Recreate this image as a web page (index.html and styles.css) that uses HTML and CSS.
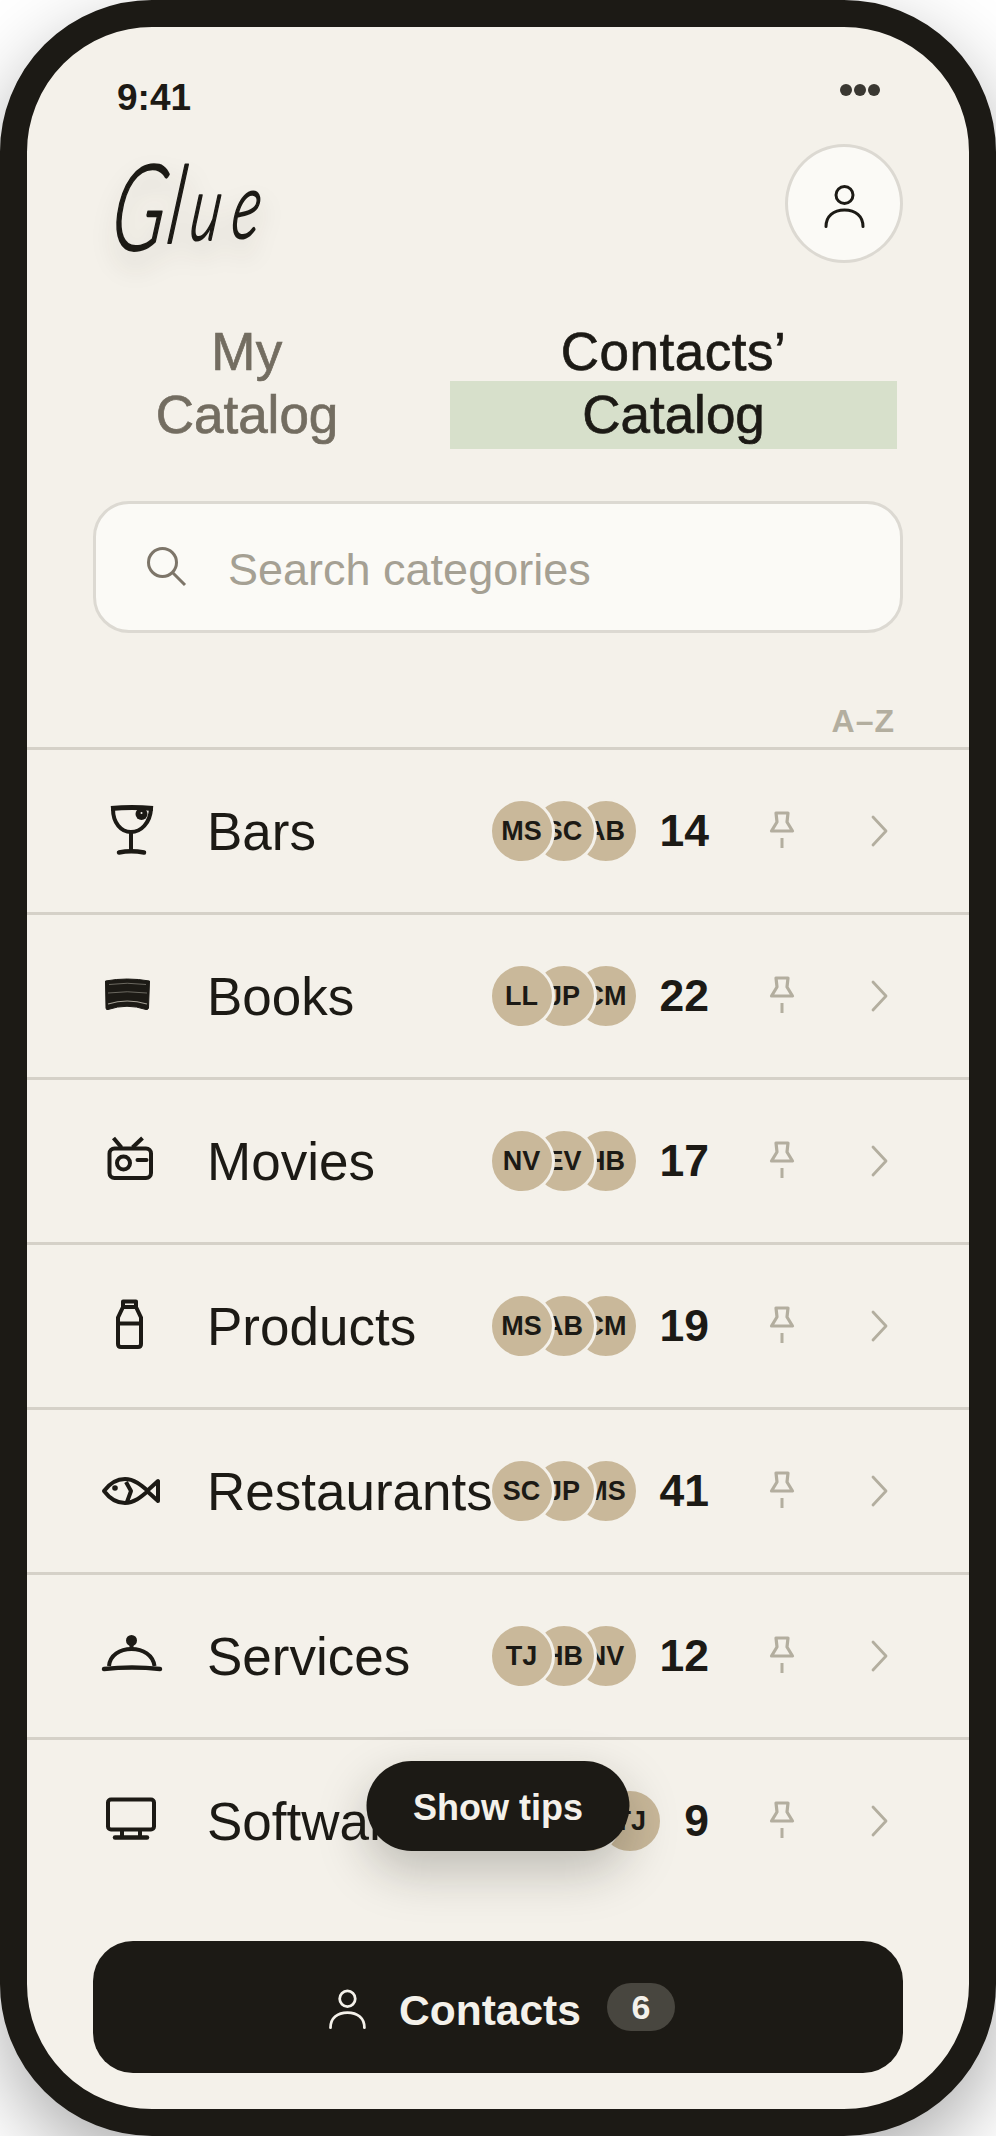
FILE: index.html
```html
<!DOCTYPE html>
<html lang="en">

<head>
    <meta charset="UTF-8">
    <meta name="viewport" content="width=device-width, initial-scale=1.0">
    <title>Glue</title>
    <link rel="stylesheet" href="styles.css">
</head>

<body>
    <svg class="sprites" aria-hidden="true">
        <symbol id="pin" viewBox="0 0 40 40">
            <path d="M14 2H26L25 11L30.5 20H9.5L15 11Z" fill="none" stroke="currentColor" stroke-width="3.2" stroke-linejoin="round" />
            <path d="M20 27V37" fill="none" stroke="currentColor" stroke-width="3" />
        </symbol>
        <symbol id="chevron" viewBox="0 0 32 40">
            <path d="M9 6L22 20L9 34" fill="none" stroke="currentColor" stroke-width="2.8" stroke-linecap="round" stroke-linejoin="round" />
        </symbol>
        <symbol id="person" viewBox="0 0 48 48">
            <circle cx="24.5" cy="15" r="8.5" fill="none" stroke="currentColor" stroke-width="3" />
            <path d="M6 46.5C6 36 13.5 30 24.5 30C35.5 30 43 36 43 46.5" fill="none" stroke="currentColor" stroke-width="3" stroke-linecap="round" />
        </symbol>
    </svg>

    <div class="phone">
        <div class="screen">
            <div class="status">
                <span class="time">9:41</span>
                <div class="dots"><i></i><i></i><i></i></div>
            </div>

            <header class="top">
                <svg class="logo" viewBox="0 0 207 119">
                    <text transform="skewX(-8) scale(0.65 1)"><tspan x="46" y="106" font-size="120">G</tspan><tspan x="132" y="99" font-size="108">l</tspan><tspan x="166" y="96" font-size="90">u</tspan><tspan x="230" y="94" font-size="92">e</tspan></text>
                </svg>
                <button class="profile"><svg><use href="#person" /></svg></button>
            </header>

            <nav class="tabs">
                <div class="tab tab-mine">
                    <span class="tab-line">My</span>
                    <span class="tab-line tab-line2">Catalog</span>
                </div>
                <div class="tab tab-contacts">
                    <span class="tab-line">Contacts’</span>
                    <span class="tab-line tab-line2 mark">Catalog</span>
                </div>
            </nav>

            <div class="search">
                <svg viewBox="0 0 40 40" class="search-icon">
                    <circle cx="15.5" cy="15.5" r="14" fill="none" stroke="currentColor" stroke-width="3" />
                    <path d="M26 26L38 38" fill="none" stroke="currentColor" stroke-width="3" />
                </svg>
                <span class="placeholder">Search categories</span>
            </div>

            <div class="sort">A–Z</div>

            <div class="list">
                <div class="row">
                    <svg class="row-icon" viewBox="0 0 64 64">
                        <path d="M11 9.5Q32 7.5 53 9.5" stroke-width="5" />
                        <path d="M13 10C13 24 21 33 31 33C41 33 50 24 51 10" />
                        <path d="M31 33V53" />
                        <path d="M19 53.5Q31 51 44 53.5" stroke-width="4.5" stroke-linecap="round" />
                        <circle cx="41.5" cy="15" r="6" fill="#1c1a15" stroke="none" />
                        <circle cx="41.5" cy="14" r="1" fill="#f4f1ea" stroke="none" />
                    </svg>
                    <span class="name">Bars</span>
                    <div class="avatars"><span>MS</span><span>SC</span><span>AB</span></div>
                    <span class="count">14</span>
                    <svg class="pin"><use href="#pin" /></svg>
                    <svg class="chevron"><use href="#chevron" /></svg>
                </div>
                <div class="row">
                    <svg class="row-icon" viewBox="0 0 64 64">
                        <path d="M5.5 17Q27 13 49.5 17L48.5 44Q48 46 46 45.5Q27 39 8 45.5Q6 46 6 44Z" fill="#1c1a15" stroke="#1c1a15" stroke-width="1" />
                        <path d="M9 20.5Q27 18 46 20.5M8 29Q27 26.5 47 29" stroke="#8d897f" stroke-width="0.7" />
                        <path d="M8 40Q27 34 47 40" stroke="#a5a196" stroke-width="1.2" />
                    </svg>
                    <span class="name">Books</span>
                    <div class="avatars"><span>LL</span><span>JP</span><span>CM</span></div>
                    <span class="count">22</span>
                    <svg class="pin"><use href="#pin" /></svg>
                    <svg class="chevron"><use href="#chevron" /></svg>
                </div>
                <div class="row">
                    <svg class="row-icon" viewBox="0 0 64 64">
                        <rect x="9.5" y="19.5" width="41.5" height="29.5" rx="5" />
                        <path d="M13.5 9L21.5 18.5M42.5 9L32.5 18.5" />
                        <circle cx="23.5" cy="34" r="6.5" />
                        <path d="M37.5 31H46.5" stroke-linecap="round" />
                    </svg>
                    <span class="name">Movies</span>
                    <div class="avatars"><span>NV</span><span>EV</span><span>HB</span></div>
                    <span class="count">17</span>
                    <svg class="pin"><use href="#pin" /></svg>
                    <svg class="chevron"><use href="#chevron" /></svg>
                </div>
                <div class="row">
                    <svg class="row-icon" viewBox="0 0 64 64">
                        <path d="M23 13V7.5H36V13" />
                        <path d="M23 13H36L41 23.5V50Q41 53 38 53H21Q18 53 18 50V23.5Z" />
                        <path d="M18 29.5H41" />
                    </svg>
                    <span class="name">Products</span>
                    <div class="avatars"><span>MS</span><span>AB</span><span>CM</span></div>
                    <span class="count">19</span>
                    <svg class="pin"><use href="#pin" /></svg>
                    <svg class="chevron"><use href="#chevron" /></svg>
                </div>
                <div class="row">
                    <svg class="row-icon" viewBox="0 0 64 64">
                        <path d="M4 32C10 24 18 20 25 20C34 20 41 26 48 32C41 38 34 44 25 44C18 44 10 40 4 32Z" />
                        <path d="M47 32L58 22V42Z" />
                        <path d="M26 23L31 32L27 43" />
                        <circle cx="15" cy="29" r="2.8" fill="#1c1a15" stroke="none" />
                    </svg>
                    <span class="name">Restaurants</span>
                    <div class="avatars"><span>SC</span><span>JP</span><span>MS</span></div>
                    <span class="count">41</span>
                    <svg class="pin"><use href="#pin" /></svg>
                    <svg class="chevron"><use href="#chevron" /></svg>
                </div>
                <div class="row">
                    <svg class="row-icon" viewBox="0 0 64 64">
                        <circle cx="31.5" cy="16.5" r="3.5" fill="#1c1a15" />
                        <path d="M31.5 20V25" />
                        <path d="M9 42C10 31 20 25 31.5 25C43 25 53 31 54.5 42" />
                        <path d="M4 45Q32 42 60 45" stroke-width="4.5" stroke-linecap="round" />
                    </svg>
                    <span class="name">Services</span>
                    <div class="avatars"><span>TJ</span><span>HB</span><span>NV</span></div>
                    <span class="count">12</span>
                    <svg class="pin"><use href="#pin" /></svg>
                    <svg class="chevron"><use href="#chevron" /></svg>
                </div>
                <div class="row">
                    <svg class="row-icon" viewBox="0 0 64 64">
                        <rect x="8" y="10.5" width="46" height="30" rx="3" />
                        <path d="M22 41V48M40 41V48" />
                        <path d="M15 48.5H47" stroke-width="4.5" stroke-linecap="round" />
                    </svg>
                    <span class="name">Software</span>
                    <div class="avatars"><span>LL</span><span>SC</span><span>TJ</span></div>
                    <span class="count">9</span>
                    <svg class="pin"><use href="#pin" /></svg>
                    <svg class="chevron"><use href="#chevron" /></svg>
                </div>
            </div>

            <button class="tips">Show tips</button>

            <button class="contacts">
                <svg class="contacts-icon"><use href="#person" /></svg>
                <span class="contacts-label">Contacts</span>
                <span class="badge">6</span>
            </button>
        </div>
    </div>
</body>

</html>
```

FILE: styles.css
```css
* {
    box-sizing: border-box;
}

body {
    margin: 0;
    background-color: #ffffff;
    font-family: "Liberation Sans", Arial, sans-serif;
    color: #1c1a15;
}

button {
    font-family: inherit;
    border: none;
    padding: 0;
}

.sprites {
    position: absolute;
    width: 0;
    height: 0;
}

.phone {
    width: 996px;
    height: 2136px;
    border: 27px solid #1c1a15;
    border-radius: 152px;
    background-color: #f4f1ea;
    box-shadow: 0 30px 80px rgba(0, 0, 0, 0.32);
    overflow: hidden;
}

.screen {
    position: relative;
    height: 100%;
    display: flex;
    flex-direction: column;
}

/* status bar */
.status {
    height: 117px;
    display: flex;
    justify-content: space-between;
    padding: 51px 89px 0 90px;
}

.time {
    font-size: 37px;
    font-weight: bold;
    line-height: 40px;
}

.dots {
    display: flex;
    gap: 2px;
    margin-top: 6px;
}

.dots i {
    width: 12px;
    height: 12px;
    border-radius: 50%;
    background-color: #3a3832;
}

/* logo + profile */
.top {
    display: flex;
    justify-content: space-between;
    padding: 0 66px;
    height: 119px;
}

.logo {
    width: 207px;
    height: 119px;
    overflow: visible;
    font-family: "Lato", sans-serif;
    font-style: italic;
    font-weight: 300;
    fill: #1c1a15;
    stroke: #1c1a15;
    stroke-width: 2;
    stroke-linejoin: round;
    filter: drop-shadow(0 14px 12px rgba(28, 26, 21, 0.16));
}

.profile {
    width: 118px;
    height: 119px;
    border-radius: 50%;
    border: 3px solid #dcd9d2;
    background-color: #fbfaf6;
    color: #1c1a15;
    display: flex;
    align-items: center;
    justify-content: center;
}

.profile svg {
    width: 48px;
    height: 48px;
}

/* tabs */
.tabs {
    display: flex;
    margin-top: 55px;
    padding: 0 72px 0 66px;
    gap: 49px;
    font-size: 53px;
    text-align: center;
    -webkit-text-stroke: 0.7px currentColor;
}

.tab {
    display: flex;
    flex-direction: column;
}

.tab-mine {
    width: 308px;
    color: #736d61;
}

.tab-contacts {
    width: 447px;
}

.tab-line {
    height: 63px;
    line-height: 67px;
    letter-spacing: 0.5px;
}

.tab-line2 {
    height: 68px;
    line-height: 68px;
    letter-spacing: 0;
}

.mark {
    background-color: #d7e0cb;
}

/* search */
.search {
    margin: 52px 66px 0;
    height: 132px;
    display: flex;
    align-items: center;
    padding-left: 51px;
    border: 3px solid #dcd9d2;
    border-radius: 36px;
    background-color: #fbfaf6;
}

.search-icon {
    width: 40px;
    height: 40px;
    color: #7d7569;
}

.placeholder {
    margin-left: 41px;
    padding-top: 6px;
    font-size: 45px;
    color: #a5a093;
}

.sort {
    margin-top: 70px;
    padding-right: 74px;
    text-align: right;
    font-size: 32px;
    font-weight: bold;
    letter-spacing: 1px;
    line-height: 36px;
    height: 44px;
    color: #b3ae9f;
}

/* category rows */
.list {
    flex: 1;
    min-height: 0;
}

.row {
    height: 165px;
    display: flex;
    align-items: center;
    padding: 0 73px;
    border-top: 3px solid #d5d1c8;
}

.row-icon {
    flex: none;
    width: 64px;
    height: 64px;
    fill: none;
    stroke: #1c1a15;
    stroke-width: 4;
    stroke-linejoin: round;
}

.name {
    flex: 1;
    margin-left: 43px;
    font-size: 53px;
    white-space: nowrap;
}

.avatars {
    display: flex;
}

.avatars span {
    position: relative;
    width: 66px;
    height: 66px;
    margin-left: -24px;
    display: flex;
    align-items: center;
    justify-content: center;
    border: 3px solid #f4f1ea;
    border-radius: 50%;
    background-color: #c9b89a;
    font-size: 27px;
    font-weight: bold;
}

.avatars span:nth-child(1) {
    z-index: 3;
}

.avatars span:nth-child(2) {
    z-index: 2;
}

.count {
    margin-left: 21px;
    font-size: 44.5px;
    font-weight: bold;
}

.pin {
    width: 40px;
    height: 40px;
    margin-left: 53px;
    color: #b3ae9f;
}

.chevron {
    width: 32px;
    height: 40px;
    margin-left: 62px;
    color: #b3ae9f;
}

/* floating + footer */
.tips {
    position: absolute;
    left: 50%;
    bottom: 258px;
    z-index: 5;
    transform: translateX(-50%);
    width: 263px;
    height: 90px;
    padding-top: 4px;
    border-radius: 45px;
    background-color: #1c1a15;
    color: #f4f1ea;
    font-size: 36px;
    font-weight: bold;
    box-shadow: 0 20px 50px rgba(28, 26, 21, 0.25);
}

.contacts {
    flex: none;
    margin: 0 66px 36px;
    height: 132px;
    display: flex;
    align-items: center;
    justify-content: center;
    gap: 26px;
    border-radius: 40px;
    background-color: #1c1a15;
    color: #f4f1ea;
    font-size: 42.5px;
    font-weight: bold;
}

.contacts-label {
    padding-top: 8px;
}

.contacts-icon {
    width: 52px;
    height: 44px;
}

.badge {
    width: 68px;
    height: 48px;
    line-height: 48px;
    border-radius: 24px;
    background-color: #48463f;
    font-size: 34px;
    text-align: center;
}
```
